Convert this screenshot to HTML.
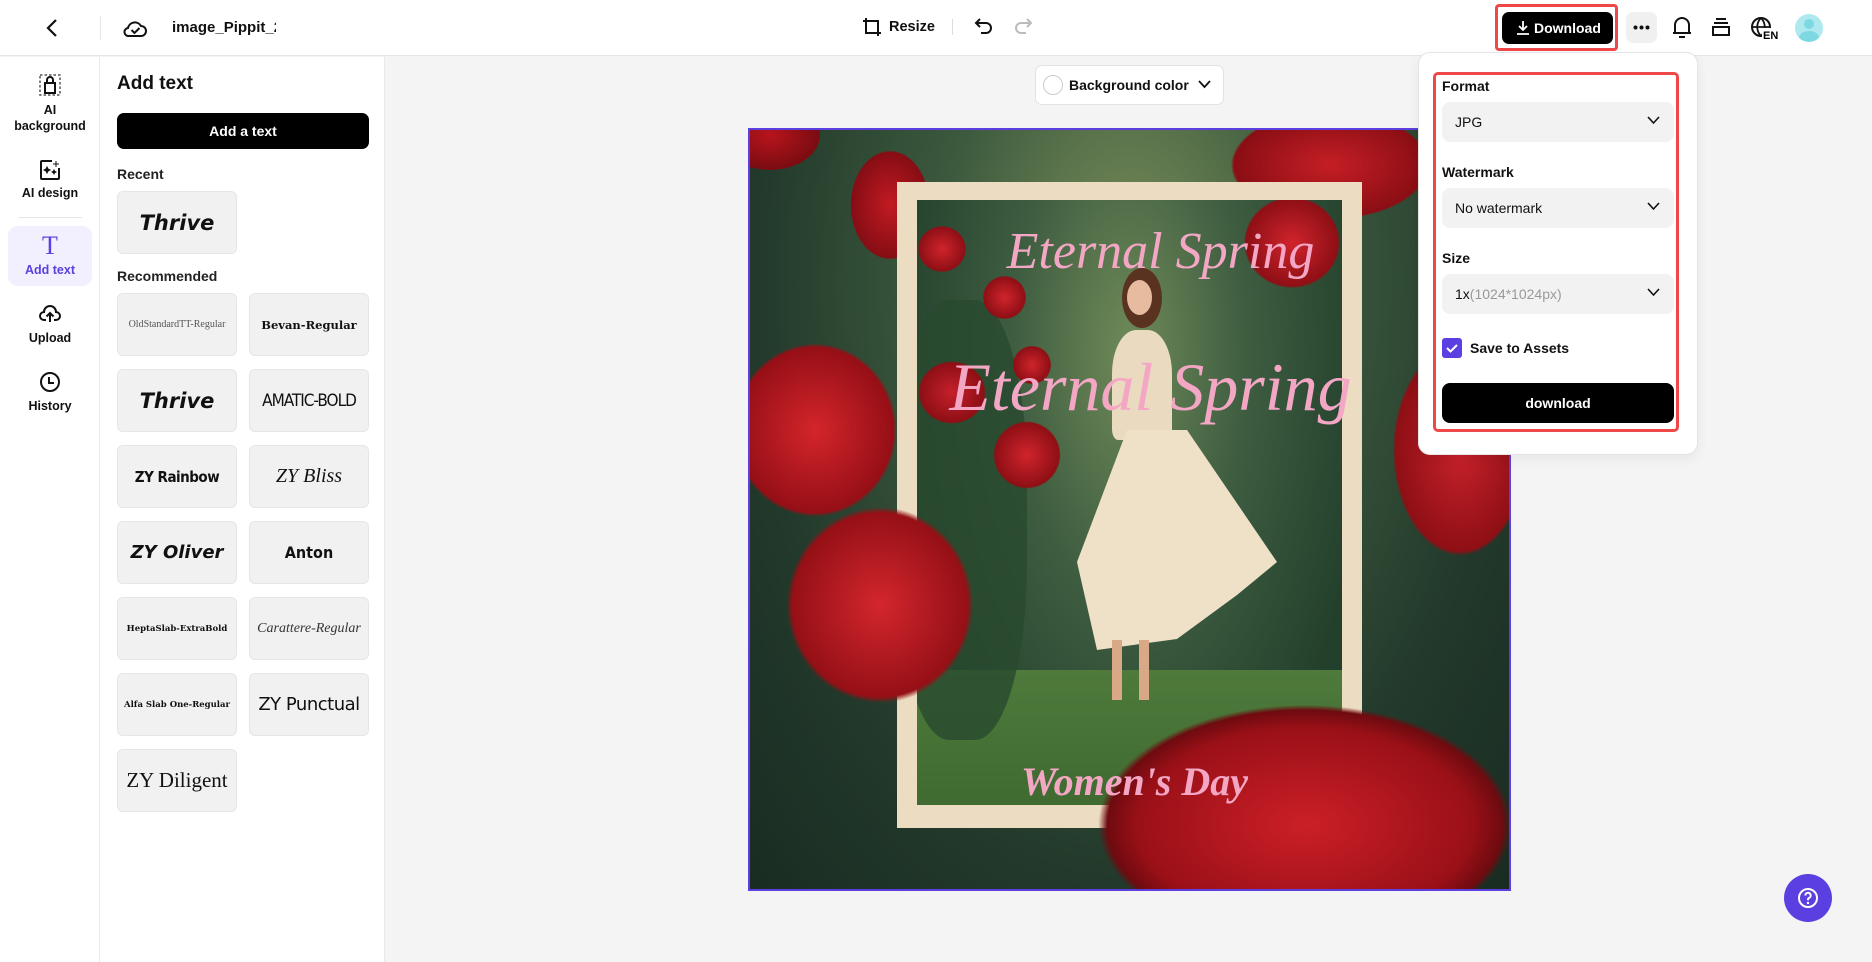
<!DOCTYPE html>
<html><head><meta charset="utf-8"><style>
*{box-sizing:border-box;margin:0;padding:0}
body{width:1872px;height:962px;overflow:hidden;background:#f4f4f4;font-family:"Liberation Sans",sans-serif;color:#111;position:relative}
.a{position:absolute}
.hdr{left:0;top:0;width:1872px;height:56px;background:#fff;border-bottom:1px solid #e6e6e6}
.rail{left:0;top:57px;width:100px;height:905px;background:#fff;border-right:1px solid #e8e8e8}
.panel{left:100px;top:57px;width:285px;height:905px;background:#fff;border-right:1px solid #e8e8e8}
.nl{width:100px;text-align:center;font-size:12.5px;font-weight:bold;line-height:16px;color:#111}
.card{width:120px;height:63px;background:#f1f1f1;border:1px solid #e6e6e6;border-radius:6px;display:flex;align-items:center;justify-content:center;color:#111}
.lbl{font-size:14px;font-weight:bold}
.sel{left:1442px;width:232px;height:40px;background:#f2f2f2;border-radius:8px;font-size:14px;padding-left:13px;line-height:40px}
.sel svg{position:absolute;right:14px;top:14px}
.rose{position:absolute;border-radius:50%}
</style></head><body>
<div class="a hdr"></div>
<svg class="a" style="left:46px;top:18px" width="12" height="20" viewBox="0 0 12 20"><path d="M10 2 L2 10 L10 18" fill="none" stroke="#111" stroke-width="2.2"/></svg>
<div class="a" style="left:100px;top:16px;width:1px;height:24px;background:#e6e6e6"></div>
<svg class="a" style="left:123px;top:17px" width="24" height="22" viewBox="0 0 24 22"><path d="M6 19 H18 a5 5 0 0 0 0-10 a7 7 0 0 0-13 2 a4 4 0 0 0 1 8z" fill="none" stroke="#111" stroke-width="2"/><path d="M8.5 13 l3 3 l5-5" fill="none" stroke="#111" stroke-width="2"/></svg>
<div class="a" style="left:172px;top:19px;font-size:15px;font-weight:bold;width:104px;overflow:hidden;white-space:nowrap">image_Pippit_2025</div>
<svg class="a" style="left:862px;top:17px" width="20" height="20" viewBox="0 0 20 20"><path d="M4 1v15h15M1 4h15v15" fill="none" stroke="#111" stroke-width="2"/></svg>
<div class="a" style="left:889px;top:19px;font-size:14.5px;font-weight:bold">Resize</div>
<div class="a" style="left:952px;top:19px;width:1px;height:16px;background:#ddd"></div>
<svg class="a" style="left:974px;top:16px" width="20" height="20" viewBox="0 0 20 20"><path d="M6 3 L2 7 L6 11 M2 7 H12 a5 5 0 0 1 0 10 H7" fill="none" stroke="#111" stroke-width="2"/></svg>
<svg class="a" style="left:1013px;top:16px" width="20" height="20" viewBox="0 0 20 20"><path d="M14 3 L18 7 L14 11 M18 7 H8 a5 5 0 0 0 0 10 H13" fill="none" stroke="#bbb" stroke-width="2"/></svg>
<div class="a" style="left:1495px;top:4px;width:123px;height:47px;border:3px solid #f04848;border-radius:4px"></div>
<div class="a" style="left:1502px;top:12px;width:111px;height:32px;background:#000;border-radius:7px;color:#fff;font-size:14px;font-weight:bold;line-height:32px;padding-left:32px">Download</div>
<svg class="a" style="left:1516px;top:20px" width="14" height="15" viewBox="0 0 14 15"><path d="M7 1v9M3 6l4 4 4-4M1 14h12" fill="none" stroke="#fff" stroke-width="1.8"/></svg>
<div class="a" style="left:1626px;top:12px;width:31px;height:31px;background:#f0f0f0;border-radius:7px"></div>
<svg class="a" style="left:1626px;top:12px" width="31" height="31" viewBox="0 0 31 31"><circle cx="9.5" cy="15.5" r="2" fill="#111"/><circle cx="15.5" cy="15.5" r="2" fill="#111"/><circle cx="21.5" cy="15.5" r="2" fill="#111"/></svg>
<svg class="a" style="left:1671px;top:15px" width="22" height="24" viewBox="0 0 22 24"><path d="M4 18 V10 a7 7 0 0 1 14 0 V18 H2 H20 M8 22 H14" fill="none" stroke="#111" stroke-width="2"/></svg>
<svg class="a" style="left:1711px;top:17px" width="20" height="20" viewBox="0 0 20 20"><path d="M5 2H15M3 6H17M2 10H18V18H2z" fill="none" stroke="#111" stroke-width="2"/></svg>
<svg class="a" style="left:1750px;top:16px" width="30" height="24" viewBox="0 0 30 24"><circle cx="11" cy="11" r="9" fill="none" stroke="#111" stroke-width="2"/><path d="M2 11H20M11 2c-5 5-5 13 0 18M11 2c5 5 5 13 0 18" fill="none" stroke="#111" stroke-width="1.8"/><rect x="12" y="12" width="18" height="12" fill="#fff"/><text x="13" y="23" font-size="11" font-weight="bold" font-family="Liberation Sans">EN</text></svg>
<div class="a" style="left:1795px;top:14px;width:28px;height:28px;border-radius:50%;background:#aee9ef;overflow:hidden"><div class="a" style="left:9px;top:5px;width:10px;height:10px;border-radius:50%;background:#7dd8e2"></div><div class="a" style="left:4px;top:17px;width:20px;height:14px;border-radius:50%;background:#7dd8e2"></div></div>
<div class="a rail"></div>
<svg class="a" style="left:39px;top:74px" width="22" height="22" viewBox="0 0 22 22"><rect x="1" y="1" width="20" height="20" fill="none" stroke="#555" stroke-width="1.5" stroke-dasharray="2.5 2"/><path d="M6 19V9h10v10zM8 9V6a3 3 0 0 1 6 0v3" fill="none" stroke="#111" stroke-width="2"/></svg>
<div class="a nl" style="top:102px">AI<br>background</div>
<svg class="a" style="left:39px;top:159px" width="22" height="22" viewBox="0 0 22 22"><path d="M13 2H3a1 1 0 0 0-1 1v16a1 1 0 0 0 1 1h16a1 1 0 0 0 1-1V9" fill="none" stroke="#111" stroke-width="2"/><path d="M8 8l1 2 2 1-2 1-1 2-1-2-2-1 2-1zM15 11l.7 1.3 1.3.7-1.3.7-.7 1.3-.7-1.3-1.3-.7 1.3-.7zM17 2v6M14 5h6" fill="#111" stroke="#111" stroke-width="1"/></svg>
<div class="a nl" style="top:185px">AI design</div>
<div class="a" style="left:18px;top:217px;width:64px;height:1px;background:#e6e6e6"></div>
<div class="a" style="left:8px;top:226px;width:84px;height:60px;background:#f2efff;border-radius:10px"></div>
<div class="a" style="left:0;top:232px;width:100px;text-align:center;font-family:'Liberation Serif',serif;font-size:26px;color:#5b3fe0;line-height:28px">T</div>
<div class="a nl" style="top:262px;color:#5b3fe0">Add text</div>
<svg class="a" style="left:39px;top:303px" width="22" height="20" viewBox="0 0 22 20"><path d="M7 17H5a4 4 0 0 1 0-8 6 6 0 0 1 12 0 4 4 0 0 1 0 8h-2M11 19V10M7.5 13.5 11 10l3.5 3.5" fill="none" stroke="#111" stroke-width="2"/></svg>
<div class="a nl" style="top:330px">Upload</div>
<svg class="a" style="left:39px;top:371px" width="22" height="22" viewBox="0 0 22 22"><circle cx="11" cy="11" r="9" fill="none" stroke="#111" stroke-width="2"/><path d="M10 6v6h5" fill="none" stroke="#111" stroke-width="2"/></svg>
<div class="a nl" style="top:398px">History</div>
<div class="a panel"></div>
<div class="a" style="left:117px;top:73px;font-size:19px;font-weight:bold">Add text</div>
<div class="a" style="left:117px;top:113px;width:252px;height:36px;background:#000;border-radius:7px;color:#fff;text-align:center;line-height:36px;font-size:14px;font-weight:bold">Add a text</div>
<div class="a" style="left:117px;top:166px;font-size:14px;font-weight:bold;color:#222">Recent</div>
<div class="a card" style="left:117px;top:191px;font-family:'DejaVu Sans';font-weight:bold;font-size:21px;font-style:italic">Thrive</div>
<div class="a" style="left:117px;top:268px;font-size:14px;font-weight:bold;color:#222">Recommended</div>
<div class="a card" style="left:117px;top:293px;font-family:'Liberation Serif';font-size:10px;color:#555">OldStandardTT-Regular</div>
<div class="a card" style="left:249px;top:293px;font-family:'DejaVu Serif';font-weight:bold;font-size:11.5px">Bevan-Regular</div>
<div class="a card" style="left:117px;top:369px;font-family:'DejaVu Sans';font-weight:bold;font-size:21px;font-style:italic">Thrive</div>
<div class="a card" style="left:249px;top:369px;font-family:'DejaVu Sans Condensed','DejaVu Sans';font-size:17px;letter-spacing:-1px">AMATIC-BOLD</div>
<div class="a card" style="left:117px;top:445px;font-family:'DejaVu Sans Condensed','DejaVu Sans';font-weight:bold;font-size:15px;letter-spacing:-0.5px">ZY Rainbow</div>
<div class="a card" style="left:249px;top:445px;font-family:'Liberation Serif';font-style:italic;font-size:20px">ZY Bliss</div>
<div class="a card" style="left:117px;top:521px;font-family:'DejaVu Sans';font-weight:bold;font-style:italic;font-size:18px">ZY Oliver</div>
<div class="a card" style="left:249px;top:521px;font-family:'DejaVu Sans Condensed','DejaVu Sans';font-weight:bold;font-size:16px">Anton</div>
<div class="a card" style="left:117px;top:597px;font-family:'DejaVu Serif';font-weight:bold;font-size:8.5px">HeptaSlab-ExtraBold</div>
<div class="a card" style="left:249px;top:597px;font-family:'Liberation Serif';font-style:italic;font-size:14px;color:#333">Carattere-Regular</div>
<div class="a card" style="left:117px;top:673px;font-family:'DejaVu Serif';font-weight:bold;font-size:8.5px">Alfa Slab One-Regular</div>
<div class="a card" style="left:249px;top:673px;font-family:'DejaVu Sans';font-size:18px;letter-spacing:-0.5px">ZY Punctual</div>
<div class="a card" style="left:117px;top:749px;font-family:'Liberation Serif';font-size:21px">ZY Diligent</div>
<div class="a" style="left:1035px;top:65px;width:189px;height:40px;background:#fff;border:1px solid #e2e2e2;border-radius:7px;font-size:14px;font-weight:bold;line-height:38px;padding-left:33px">Background color</div>
<div class="a" style="left:1043px;top:75px;width:20px;height:20px;border-radius:50%;border:1px solid #ccc;background:#fff"></div>
<svg class="a" style="left:1198px;top:80px" width="13" height="9" viewBox="0 0 13 9"><path d="M1 1l5.5 6L12 1" fill="none" stroke="#111" stroke-width="1.8"/></svg>
<div class="a" style="left:748px;top:128px;width:763px;height:763px;border:2px solid #5b3fe0;overflow:hidden;background:radial-gradient(ellipse at 50% 20%,#7b8f5a 0%,#3c5a3e 35%,#22392b 70%,#1a2c22 100%)">
 <div class="rose" style="left:-30px;top:-30px;width:100px;height:70px;background:radial-gradient(#b8141c,#7a0c12 70%,transparent 72%)"></div>
 <div class="rose" style="left:100px;top:20px;width:80px;height:110px;background:radial-gradient(#c21a22,#860d14 68%,transparent 70%)"></div>
 <div class="rose" style="left:480px;top:-20px;width:200px;height:110px;background:radial-gradient(#c51e25,#8a0e14 68%,transparent 70%)"></div>
 <div class="rose" style="left:-20px;top:210px;width:170px;height:180px;background:radial-gradient(#d3252b,#960f16 65%,transparent 68%)"></div>
 <div class="rose" style="left:640px;top:210px;width:140px;height:220px;background:radial-gradient(#c8222a,#8e0f15 65%,transparent 68%)"></div>
 <div class="a" style="left:147px;top:52px;width:465px;height:646px;background:#ecdcc2"></div>
 <div class="a" style="left:167px;top:70px;width:425px;height:605px;background:radial-gradient(ellipse at 50% 25%,#6f8a58 0%,#3d5c40 40%,#23402c 80%);overflow:hidden">
  <div class="a" style="left:0;top:470px;width:425px;height:140px;background:linear-gradient(#4f7a3c,#3e6a30)"></div>
  <div class="a" style="left:-20px;top:100px;width:130px;height:440px;border-radius:40%;background:#284a2e;opacity:.8"></div>
  <div class="rose" style="left:0;top:25px;width:50px;height:48px;background:radial-gradient(#d0242c,#8e0f15 65%,transparent 68%)"></div>
  <div class="rose" style="left:65px;top:75px;width:45px;height:45px;background:radial-gradient(#d0242c,#8e0f15 65%,transparent 68%)"></div>
  <div class="rose" style="left:95px;top:145px;width:40px;height:40px;background:radial-gradient(#d0242c,#8e0f15 65%,transparent 68%)"></div>
  <div class="rose" style="left:0;top:160px;width:70px;height:65px;background:radial-gradient(#c5202a,#8e0f15 65%,transparent 68%)"></div>
  <div class="rose" style="left:75px;top:220px;width:70px;height:70px;background:radial-gradient(#d0242c,#8e0f15 65%,transparent 68%)"></div>
  <div class="rose" style="left:325px;top:-5px;width:100px;height:95px;background:radial-gradient(#d0242c,#8e0f15 65%,transparent 68%)"></div>
  <div class="a" style="left:205px;top:68px;width:40px;height:60px;border-radius:50%;background:#5a3320"></div>
  <div class="a" style="left:210px;top:80px;width:25px;height:35px;border-radius:50%;background:#e6bba0"></div>
  <div class="a" style="left:195px;top:130px;width:60px;height:110px;border-radius:40% 40% 10% 10%;background:#eadac0"></div>
  <div class="a" style="left:160px;top:230px;width:200px;height:220px;background:#efe0c8;clip-path:polygon(25% 0,55% 0,100% 60%,80% 75%,50% 95%,10% 100%,0 60%)"></div>
  <div class="a" style="left:195px;top:440px;width:10px;height:60px;background:#d9a987"></div>
  <div class="a" style="left:222px;top:440px;width:10px;height:60px;background:#d9a987"></div>
 </div>
 <div class="rose" style="left:30px;top:370px;width:200px;height:210px;background:radial-gradient(#d3262d,#951016 62%,transparent 66%)"></div>
 <div class="rose" style="left:340px;top:570px;width:430px;height:250px;background:radial-gradient(#cc1f27,#9a1017 55%,#6e0b10 65%,transparent 68%)"></div>
 <div class="a" style="left:0;top:92px;width:761px;text-align:center;font-family:'Liberation Serif',serif;font-style:italic;font-size:52px;color:#f4a7c5;padding-left:60px">Eternal Spring</div>
 <div class="a" style="left:0;top:218px;width:761px;text-align:center;font-family:'Liberation Serif',serif;font-style:italic;font-size:68px;color:#f4a7c5;padding-left:40px">Eternal Spring</div>
 <div class="a" style="left:0;top:628px;width:761px;text-align:center;font-family:'Liberation Serif',serif;font-style:italic;font-weight:bold;font-size:40px;color:#f4a7c5;padding-left:8px">Women's Day</div>
</div>
<div class="a" style="left:1418px;top:52px;width:280px;height:403px;background:#fff;border:1px solid #e4e4e4;border-radius:12px;box-shadow:0 4px 12px rgba(0,0,0,.06)"></div>
<div class="a" style="left:1433px;top:72px;width:246px;height:360px;border:3px solid #f04848;border-radius:5px"></div>
<div class="a lbl" style="left:1442px;top:78px">Format</div>
<div class="a sel" style="top:102px">JPG<svg width="13" height="9" viewBox="0 0 13 9"><path d="M1 1l5.5 6L12 1" fill="none" stroke="#111" stroke-width="1.6"/></svg></div>
<div class="a lbl" style="left:1442px;top:164px">Watermark</div>
<div class="a sel" style="top:188px">No watermark<svg width="13" height="9" viewBox="0 0 13 9"><path d="M1 1l5.5 6L12 1" fill="none" stroke="#111" stroke-width="1.6"/></svg></div>
<div class="a lbl" style="left:1442px;top:250px">Size</div>
<div class="a sel" style="top:274px">1x<span style="color:#999">(1024*1024px)</span><svg width="13" height="9" viewBox="0 0 13 9"><path d="M1 1l5.5 6L12 1" fill="none" stroke="#111" stroke-width="1.6"/></svg></div>
<div class="a" style="left:1442px;top:338px;width:20px;height:20px;background:#5b3fe0;border-radius:3px"><svg width="20" height="20" viewBox="0 0 20 20"><path d="M5 10l3.5 3.5L15 7" fill="none" stroke="#fff" stroke-width="2"/></svg></div>
<div class="a" style="left:1470px;top:340px;font-size:14px;font-weight:bold">Save to Assets</div>
<div class="a" style="left:1442px;top:383px;width:232px;height:40px;background:#000;border-radius:8px;color:#fff;text-align:center;line-height:40px;font-size:14px;font-weight:bold">download</div>
<div class="a" style="left:1784px;top:874px;width:48px;height:48px;border-radius:50%;background:#5b3fe0"></div>
<svg class="a" style="left:1796px;top:886px" width="24" height="24" viewBox="0 0 24 24"><circle cx="12" cy="12" r="9" fill="none" stroke="#fff" stroke-width="2"/><path d="M9.3 9.5a2.7 2.7 0 1 1 3.7 2.5c-.7.3-1 .8-1 1.5v.7" fill="none" stroke="#fff" stroke-width="2"/><circle cx="12" cy="17" r="1.2" fill="#fff"/></svg>
</body></html>
